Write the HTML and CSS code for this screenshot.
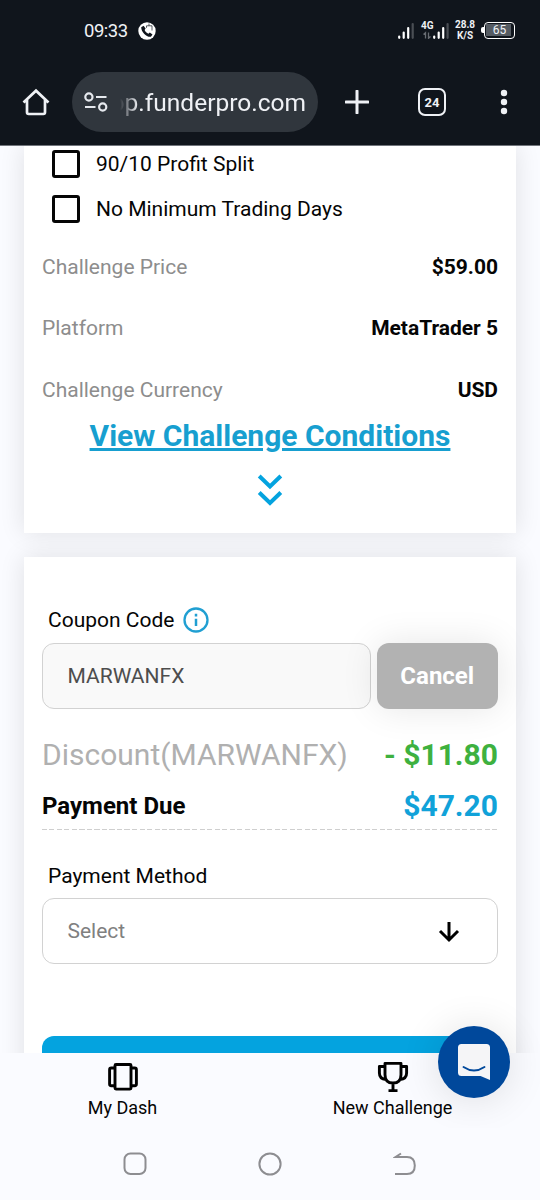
FILE: index.html
```html
<!DOCTYPE html>
<html lang="en">
<head>
<meta charset="utf-8">
<title>FunderPro checkout</title>
<link rel="stylesheet" href="styles.css">
</head>
<body>
<div class="screen">
  <header class="chrome">
    <div class="status">
      <span class="clock">09:33</span>
      <svg class="call" width="18" height="18" viewBox="0 0 18 18"><circle cx="9" cy="9" r="8.7" fill="#fff"/><path d="M3.200 5.200 5.600 3.800 7.600 6.600 6.600 8c.8 1.800 2 3 3.800 3.700l1.400-1.100 2.700 2-1.600 2.200C8.500 15.400 3.200 10 3.200 5.200z" fill="#10151c"/><path d="M8.500 5.800V3.800h5.500v4.700M11 1.500v2.200" fill="none" stroke="#10151c" stroke-width=".7"/></svg>
      <div class="indicators">
        <svg width="16" height="16" viewBox="0 0 16 16"><g stroke="#fff" stroke-width="2.200" stroke-linecap="round"><path d="M1.200 13.500v1.300M5.700 9.500v5.300M10.200 5v9.800"/><path d="M14.700 1.100v13.700" stroke="#4a4e54"/></g></svg>
        <div class="mobile">
          <span class="lte">4G</span>
          <svg class="mobile-bars" width="27" height="16" viewBox="0 0 27 16"><g stroke="#fff" stroke-width="2.200" stroke-linecap="round"><path d="M12.200 13.500v1.300M16.700 9.500v5.300M21.200 5v9.800"/><path d="M25.600 1.100v13.700" stroke="#4a4e54"/></g><path d="m1.500 11.500 2-1.800v5.800M6.500 9.500v5.800l2-1.800" fill="none" stroke="#686c72" stroke-width="1.300"/></svg>
        </div>
        <div class="speed"><span>28.8</span><span>K/S</span></div>
        <div class="battery">65</div>
      </div>
    </div>
    <div class="toolbar">
      <svg class="home" width="28" height="28" viewBox="0 0 28 28"><path d="M1.500 14.500 14 2.700l12.500 11.800M5 12v12.300q0 1.700 1.700 1.700h14.600q1.700 0 1.700-1.700V12" fill="none" stroke="#eff1f5" stroke-width="2.700"/></svg>
      <div class="address">
        <svg width="24" height="20" viewBox="0 0 24 20"><g fill="none" stroke="#e6e9ee" stroke-width="2.200"><circle cx="4.900" cy="5" r="3.600"/><path d="M12 5h10.500M1 15h10.500"/><circle cx="18.700" cy="15" r="3.600"/></g></svg>
        <span class="host"><span class="url">op.funderpro.com</span></span>
      </div>
      <svg class="plus" width="24" height="24" viewBox="0 0 24 24"><path d="M12 1v22M1 12h22" stroke="#eff1f5" stroke-width="3" stroke-linecap="round"/></svg>
      <div class="tabs">24</div>
      <svg class="more" width="8" height="26" viewBox="0 0 8 26"><g fill="#eff1f5"><circle cx="4" cy="4" r="3.200"/><circle cx="4" cy="13" r="3.200"/><circle cx="4" cy="22" r="3.200"/></g></svg>
    </div>
  </header>

  <main class="page">
    <section class="card summary">
      <label class="option"><span class="box"></span>90/10 Profit Split</label>
      <label class="option"><span class="box"></span>No Minimum Trading Days</label>
      <dl class="facts">
        <div class="fact"><dt>Challenge Price</dt><dd>$59.00</dd></div>
        <div class="fact"><dt>Platform</dt><dd>MetaTrader 5</dd></div>
        <div class="fact"><dt>Challenge Currency</dt><dd>USD</dd></div>
      </dl>
      <a class="conditions">View Challenge Conditions</a>
      <svg class="chevrons" width="26" height="34" viewBox="0 0 26 34"><path d="m2.200 3 10.800 10.500L23.800 3M2.200 19.500 13 30l10.800-10.500" fill="none" stroke="#04a3df" stroke-width="4"/></svg>
    </section>

    <section class="card payment">
      <div class="label">Coupon Code
        <svg width="26" height="26" viewBox="0 0 26 26"><circle cx="13" cy="13" r="11.500" fill="none" stroke="#209fd2" stroke-width="2.300"/><path d="M13 11.700V19M13 6.800v2.700" stroke="#209fd2" stroke-width="2.500"/></svg>
      </div>
      <div class="coupon">
        <div class="field filled">MARWANFX</div>
        <div class="cancel">Cancel</div>
      </div>
      <div class="discount"><span>Discount(MARWANFX)</span><b>- $11.80</b></div>
      <div class="due"><strong>Payment Due</strong><b>$47.20</b></div>
      <div class="label method">Payment Method</div>
      <div class="field select">Select
        <svg width="22" height="22" viewBox="0 0 22 22"><path d="M11 1v18M2 10l9 9 9-9" fill="none" stroke="#000" stroke-width="3"/></svg>
      </div>
      <div class="submit"></div>
    </section>
  </main>

  <nav class="dock">
    <div class="dock-item">
      <svg width="32" height="32" viewBox="0 0 32 32"><g fill="none" stroke="#000" stroke-width="2.900" stroke-linejoin="round"><rect x="8" y="3.500" width="16" height="24.600" rx="1"/><path d="M8 7H4.300q-1.700 0-1.700 1.700v14.300q0 1.700 1.700 1.700H8M24 7h3.700q1.700 0 1.700 1.700v14.300q0 1.700-1.700 1.700H24"/></g></svg>
      My Dash
    </div>
    <div class="dock-item">
      <svg width="32" height="32" viewBox="0 0 32 32"><g fill="none" stroke="#000" stroke-width="2.900" stroke-linejoin="round"><path d="M8 2.400h16v11.300q0 8.300-8 8.300t-8-8.300zM8 5.500H2.400V12q0 6 6.600 6.500M24 5.500h5.600V12q0 6-6.600 6.500M16 22v7.500M11.500 29.600h9"/></g></svg>
      New Challenge
    </div>
    <div class="chat">
      <svg width="34" height="38" viewBox="0 0 34 38"><path d="M4.500 1h25q3.500 0 3.500 3.500V37l-9.500-4h-19Q1 33 1 29.500v-25Q1 1 4.500 1z" fill="#f5f5f7"/><path d="M6.500 24Q17 31 27.500 24" fill="none" stroke="#00489b" stroke-width="1.900" stroke-linecap="round"/></svg>
    </div>
  </nav>

  <footer class="system">
    <svg width="24" height="24" viewBox="0 0 24 24"><rect x="1.500" y="1.500" width="21" height="20.500" rx="6" fill="none" stroke="#8d8d91" stroke-width="2"/></svg>
    <svg width="24" height="24" viewBox="0 0 24 24"><circle cx="12" cy="12" r="10.600" fill="none" stroke="#8d8d91" stroke-width="2"/></svg>
    <svg width="24" height="24" viewBox="0 0 24 24"><path d="M2 22h12q7.800 0 7.800-8.500T14 5H2.500l5.500-3.500" fill="none" stroke="#8d8d91" stroke-width="2"/></svg>
  </footer>
</div>
</body>
</html>
```
FILE: styles.css
```css
* { box-sizing: border-box; }
body { margin: 0; font-family: Roboto, "Liberation Sans", sans-serif; color: #050505; background: #fafbff; }
svg { display: block; flex: none; }
.screen { width: 540px; height: 1200px; display: flex; flex-direction: column; overflow: hidden; }

.chrome { height: 146px; flex: none; background: #10151c; border-bottom: 1px solid #70747b; color: #eff1f5; }
.status { height: 60px; display: flex; align-items: center; padding: 1px 25px 0 84px; }
.clock { font-size: 18.500px; line-height: 24px; width: 54px; white-space: nowrap; letter-spacing: -.5px; }
.indicators { display: flex; align-items: center; margin-left: auto; }
.mobile { position: relative; margin-left: 8px; }
.lte { position: absolute; left: -1px; top: -3px; font-size: 10px; line-height: 12px; font-weight: 700; }
.speed { display: flex; flex-direction: column; align-items: center; width: 24px; margin: 0 5px 0 4px; font-size: 10px; line-height: 11px; font-weight: 700; transform: translateY(-1px); }
.battery { position: relative; width: 31px; height: 17px; margin-left: 2px; border: 1.500px solid #fff; border-radius: 4px; background: linear-gradient(#555b62, #555b62) 1px 1px / 25px 12px no-repeat; font-size: 12px; line-height: 15px; text-align: center; }
.battery::before { content: ""; position: absolute; left: -4px; top: 4px; width: 3px; height: 6px; border-radius: 2px 0 0 2px; background: #fff; }
.toolbar { height: 84px; display: flex; align-items: center; padding: 0 32px 0 22px; }
.address { width: 246px; height: 60px; margin-left: 22px; padding-left: 12px; border-radius: 30px; background: #30363d; display: flex; align-items: center; }
.host { width: 186px; margin-left: 12px; padding-top: 1px; overflow: hidden; display: flex; justify-content: flex-end; font-size: 24.500px; line-height: 32px; -webkit-mask-image: linear-gradient(90deg, transparent, #000 18px); mask-image: linear-gradient(90deg, transparent, #000 18px); }
.plus { margin-left: 27px; }
.tabs { width: 28px; height: 28px; margin-left: 49px; border: 2.500px solid #eff1f5; border-radius: 7px; font-size: 13px; line-height: 25px; font-weight: 700; text-align: center; }
.more { margin-left: auto; }

.page { flex: none; height: 907px; overflow: hidden; }
.card { width: 492px; margin: 0 24px; padding: 0 18px; background: #fff; box-shadow: 0 0 24px rgba(0, 0, 0, .11); }
.summary { height: 387px; }
.option { display: flex; align-items: center; height: 45px; padding: 0 0 9px 10px; font-size: 21px; }
.box { width: 28px; height: 28px; margin-right: 16px; border: 3px solid #050505; border-radius: 3px; }
.facts { margin: 0; padding-top: 9.500px; }
.fact { display: flex; justify-content: space-between; height: 61.500px; line-height: 42px; font-size: 21px; }
.fact dt { color: #8d8d8d; }
.fact dd { margin: 0; font-weight: 700; letter-spacing: -.02px; }
.conditions { display: block; height: 42px; margin-top: -15.500px; text-align: center; font-size: 30px; line-height: 42px; font-weight: 700; color: #179fd0; text-decoration: underline; text-decoration-thickness: 3px; }
.chevrons { margin: 16px auto 0; }
.payment { height: 540px; margin-top: 24px; padding-top: 45px; }
.label { display: flex; align-items: center; gap: 9px; height: 36px; padding-left: 6px; font-size: 21px; }
.coupon { display: flex; gap: 6px; margin-top: 5px; }
.field { height: 66px; border: 1.500px solid #d2d2d2; border-radius: 12px; padding: 0 24px 0 24.500px; display: flex; align-items: center; font-size: 21px; }
.filled { width: 328.500px; background: #f9f9f9; color: #4d4d4d; }
.cancel { width: 121.500px; height: 66px; border-radius: 12px; background: #b2b2b2; color: #fff; font-size: 24px; line-height: 66px; font-weight: 700; text-align: center; box-shadow: 0 0 36px rgba(0, 0, 0, .1); }
.discount, .due { display: flex; justify-content: space-between; align-items: center; font-size: 30px; white-space: nowrap; }
.discount { height: 52px; margin-top: 19px; color: #b0b0b0; }
.discount b { color: #3eb13f; font-weight: 700; }
.due { height: 50px; background: repeating-linear-gradient(90deg, #cfcfcf 0 5px, transparent 5px 7.500px) 0 100% / 100% 1px no-repeat; }
.due strong { font-size: 24px; font-weight: 700; padding-top: 2px; }
.due b { color: #11a2d9; font-weight: 700; }
.method { margin-top: 28px; }
.select { margin-top: 4px; color: #808080; justify-content: space-between; padding-right: 37px; padding-bottom: 1px; }
.select svg { position: relative; top: 1px; }
.submit { height: 66px; margin-top: 72px; border-radius: 12px; background: #04a3df; }

.dock { position: relative; flex: none; height: 75px; display: flex; background: #fafbff; }
.dock-item { width: 270px; display: flex; flex-direction: column; align-items: center; padding: 8px 25px 0 0; font-size: 18px; line-height: 22px; }
.dock-item svg { margin-bottom: 4px; }
.chat { position: absolute; left: 438px; top: -27px; width: 72px; height: 72px; border-radius: 50%; background: #00489b; display: flex; align-items: center; justify-content: center; box-shadow: 0 2px 40px rgba(0, 0, 0, .12); }
.system { position: relative; flex: 1; display: flex; justify-content: space-between; align-items: center; padding: 0 123px; background: #fafbff; }
```
